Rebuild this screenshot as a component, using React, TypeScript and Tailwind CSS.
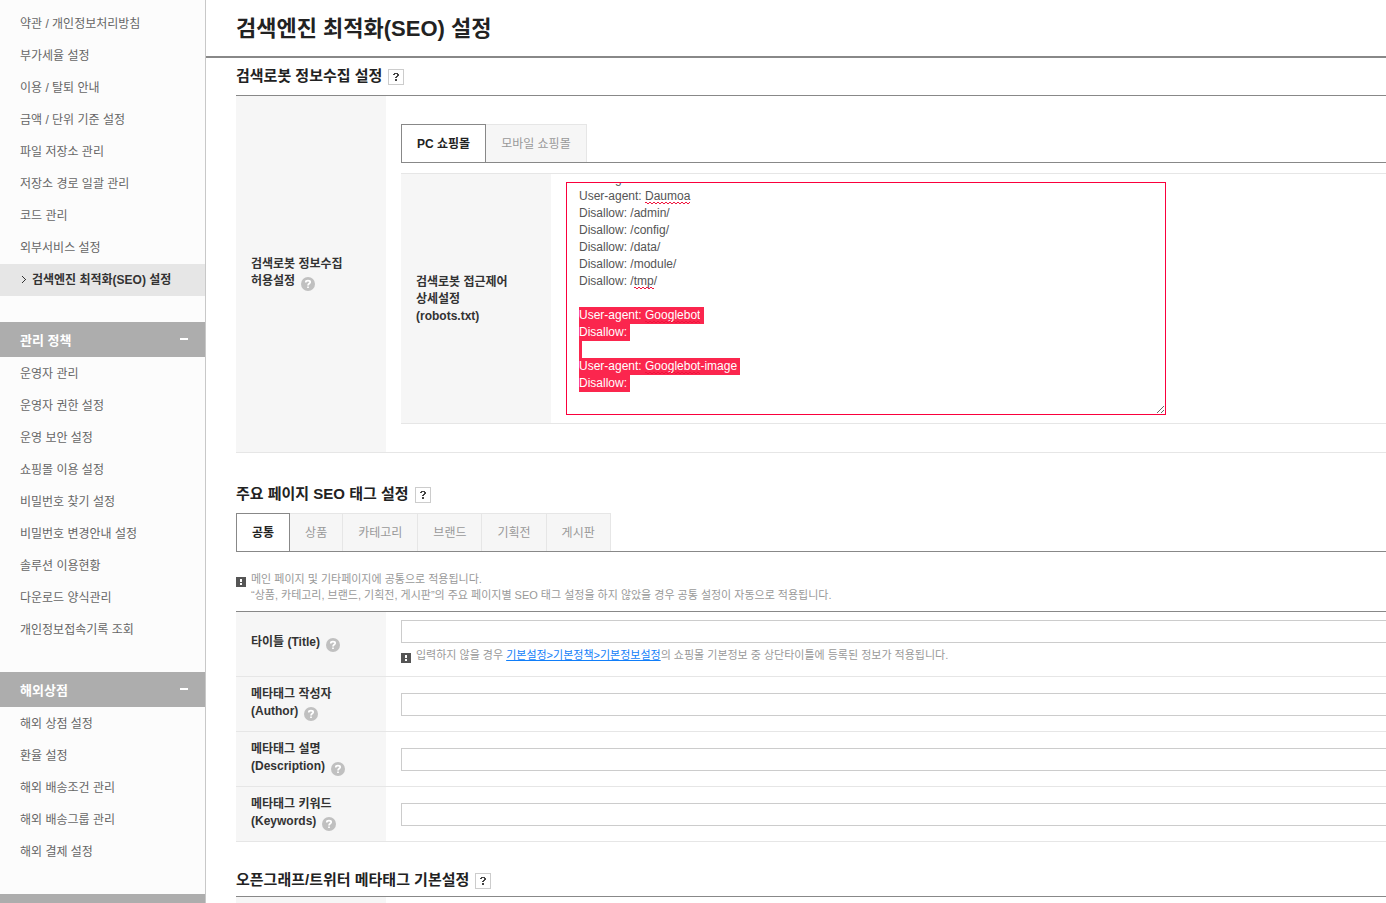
import React, { useEffect, useRef, useState } from 'react';
import clsx from 'clsx';

interface MenuGroup {
  title?: string;
  items: string[];
}

const ACTIVE_MENU = '검색엔진 최적화(SEO) 설정';

const menuGroups: MenuGroup[] = [
  {
    items: [
      '약관 / 개인정보처리방침',
      '부가세율 설정',
      '이용 / 탈퇴 안내',
      '금액 / 단위 기준 설정',
      '파일 저장소 관리',
      '저장소 경로 일괄 관리',
      '코드 관리',
      '외부서비스 설정',
      ACTIVE_MENU,
    ],
  },
  {
    title: '관리 정책',
    items: [
      '운영자 관리',
      '운영자 권한 설정',
      '운영 보안 설정',
      '쇼핑몰 이용 설정',
      '비밀번호 찾기 설정',
      '비밀번호 변경안내 설정',
      '솔루션 이용현황',
      '다운로드 양식관리',
      '개인정보접속기록 조회',
    ],
  },
  {
    title: '해외상점',
    items: ['해외 상점 설정', '환율 설정', '해외 배송조건 관리', '해외 배송그룹 관리', '해외 결제 설정'],
  },
];

const seoTabs = ['공통', '상품', '카테고리', '브랜드', '기획전', '게시판'];

const metaFields = [
  { id: 'meta-author', lines: ['메타태그 작성자', '(Author)'] },
  { id: 'meta-description', lines: ['메타태그 설명', '(Description)'] },
  { id: 'meta-keywords', lines: ['메타태그 키워드', '(Keywords)'] },
];

const blockedBot = (name: string) =>
  `User-agent: ${name}
Disallow: /admin/
Disallow: /config/
Disallow: /data/
Disallow: /module/
Disallow: /tmp/
`;

const googleRules = `User-agent: Googlebot
Disallow:

User-agent: Googlebot-image
Disallow:
`;

const robotsText = `User-agent: Daum\n${blockedBot('Daumoa')}\n${googleRules}`;

const HelpIcon: React.FC = () => (
  <button type="button" aria-label="도움말" className="ml-1.5 inline-block size-3.5 align-[-6px]">
    <svg viewBox="0 0 14 14" className="block size-3.5">
      <circle cx="7" cy="7" r="7" fill="#c0c0c0" />
      <path d="M4.8 5.6V5.2C4.8 4.2 5.6 3.7 7 3.7S9.2 4.3 9.2 5.2C9.2 6.5 7 6.6 7 8.4M7 9.6V11" fill="none" stroke="#fff" strokeWidth="1.7" />
    </svg>
  </button>
);

const ManualButton: React.FC = () => (
  <button type="button" aria-label="매뉴얼" className="mb-0.5 size-4 self-end border border-[#ccc] bg-white">
    <svg viewBox="0 0 14 14" className="block size-3.5" shapeRendering="crispEdges">
      <path d="M5 3h4v1H5zM4 4h2v1H4zM8 4h2v2H8zM7 6h2v1H7zM6 7h2v1H6zM6 9h2v2H6z" fill="#444" />
    </svg>
  </button>
);

const NoticeIcon: React.FC = () => (
  <svg viewBox="0 0 10 10" className="mt-1.5 size-2.5 shrink-0" shapeRendering="crispEdges">
    <path d="M0 0h10v10H0z" fill="#555" />
    <path d="M4 2h2v3H4zM4 6h2v2H4z" fill="#fff" />
  </svg>
);

const Notice: React.FC<{ children: React.ReactNode }> = ({ children }) => (
  <div className="flex items-start gap-[5px] text-[11px] leading-4 text-[#999]">
    <NoticeIcon />
    <p>{children}</p>
  </div>
);

const SectionTitle: React.FC<{ className?: string; children: React.ReactNode }> = ({ className, children }) => (
  <div className={clsx('flex h-6 items-center gap-1.5', className)}>
    <h2 className="pt-0.5 text-[15px] leading-6 font-bold whitespace-nowrap text-[#222]">{children}</h2>
    <ManualButton />
  </div>
);

const Tabs: React.FC<{ items: string[] }> = ({ items }) => (
  <div role="tablist" className="flex border-b border-[#888]">
    {items.map((item, index) => (
      <button
        key={item}
        type="button"
        role="tab"
        aria-selected={index === 0}
        className={clsx(
          'h-[38px] border-t border-r px-[15px] pt-0.5 whitespace-nowrap',
          index === 0
            ? 'border-l border-[#888] bg-white font-bold text-[#222]'
            : 'border-[#e6e6e6] bg-[#f6f6f6] text-[#999]'
        )}
      >
        {item}
      </button>
    ))}
  </div>
);

const Row: React.FC<{ label: React.ReactNode; className?: string; children?: React.ReactNode }> = ({
  label,
  className,
  children,
}) => (
  <div className="flex border-b border-[#e6e6e6]">
    <div className="flex w-[150px] shrink-0 items-center bg-[#f6f6f6] px-[15px] font-bold text-[#333]">{label}</div>
    <div className={clsx('min-w-0 flex-1 pl-[15px]', className)}>{children}</div>
  </div>
);

const textInput = 'block h-[23px] w-full border border-r-0 border-[#ccc] bg-white px-2 outline-none';

interface Mark {
  left: number;
  top: number;
  width: number;
}

const LINE_HEIGHT = 17;

// Where each misspelled word sits inside the editor's text
const findMarks = (input: HTMLTextAreaElement): Mark[] => {
  const ctx = document.createElement('canvas').getContext('2d');
  if (!ctx) return [];
  const { fontSize, fontFamily } = getComputedStyle(input);
  ctx.font = `${fontSize} ${fontFamily}`;

  return input.value.split('\n').flatMap((line, row) =>
    Array.from(line.matchAll(/Daumoa|tmp|Googlebot/g)).map((match) => ({
      left: ctx.measureText(line.slice(0, match.index)).width,
      top: (row + 1) * LINE_HEIGHT,
      width: ctx.measureText(match[0]).width,
    }))
  );
};

const RobotsEditor: React.FC = () => {
  const inputRef = useRef<HTMLTextAreaElement>(null);
  const [marks, setMarks] = useState<Mark[]>([]);
  const [scrollTop, setScrollTop] = useState(0);

  const refresh = () => {
    const input = inputRef.current;
    if (!input) return;
    setMarks(findMarks(input));
    setScrollTop(input.scrollTop);
  };

  // Open with the Google rules selected
  useEffect(() => {
    const input = inputRef.current;
    if (!input) return;
    input.focus();
    input.setSelectionRange(robotsText.indexOf(googleRules), robotsText.length);
    input.scrollTop = input.scrollHeight;
    refresh();
  }, []);

  return (
    <div className="relative w-[600px] max-w-full">
      <textarea
        id="robots"
        ref={inputRef}
        defaultValue={robotsText}
        spellCheck={false}
        onScroll={refresh}
        onChange={refresh}
        className="block h-[233px] w-full resize border border-[#fa003c] bg-white px-3 py-[5px] leading-[17px] text-[#555] outline-none [scrollbar-width:none] selection:bg-[#fb264e] selection:text-white"
      />
      <svg aria-hidden="true" className="pointer-events-none absolute inset-0 size-full overflow-hidden" shapeRendering="crispEdges">
        <defs>
          <pattern id="squiggle" width="4" height="2" patternUnits="userSpaceOnUse">
            <path d="M0 0h2v1H0zM2 1h2v1H2z" fill="#f0143c" />
          </pattern>
        </defs>
        {marks
          .filter((mark) => mark.top > scrollTop)
          .map((mark, index) => (
            <g key={index} transform={`translate(${Math.round(mark.left) + 13} ${mark.top - scrollTop + 3})`}>
              <rect width={Math.round(mark.width)} height="2" fill="url(#squiggle)" />
            </g>
          ))}
      </svg>
    </div>
  );
};

const Sidebar: React.FC = () => (
  <nav className="w-[206px] shrink-0 border-r border-[#c8c8c8] bg-[#fcfcfc] text-[#666]">
    {menuGroups.map((group, index) => (
      <div key={index} className="pb-[26px]">
        {group.title && (
          <button
            type="button"
            className="flex h-[35px] w-full items-center justify-between bg-[#adadad] pt-0.5 pr-[17px] pl-5 text-[13px] font-bold text-white"
          >
            {group.title}
            <span className="mb-1 h-0.5 w-2 bg-white" />
          </button>
        )}
        <ul className={group.title ? 'pt-px' : 'pt-2'}>
          {group.items.map((item) => (
            <li key={item}>
              <a
                href="#"
                className={clsx(
                  'flex h-8 items-center pl-5 whitespace-nowrap',
                  item === ACTIVE_MENU && 'bg-[#e6e6e6] font-bold text-[#333]'
                )}
              >
                {item === ACTIVE_MENU && (
                  <svg viewBox="0 0 12 8" className="h-2 w-3" shapeRendering="crispEdges">
                    <path d="M2 0h1v1H2zM3 1h1v1H3zM4 2h1v1H4zM5 3h1v1H5zM4 4h1v1H4zM3 5h1v1H3zM2 6h1v1H2z" fill="#333" />
                  </svg>
                )}
                {item}
              </a>
            </li>
          ))}
        </ul>
      </div>
    ))}
    <div className="h-[35px] bg-[#adadad]" />
  </nav>
);

export default function App() {
  return (
    <div className="flex h-screen overflow-hidden bg-white font-['Liberation_Sans','Noto_Sans_CJK_KR',sans-serif] text-xs leading-[17px]">
      <Sidebar />

      <main className="min-w-0 flex-1">
        <header className="flex h-[58px] items-center border-b-2 border-[#888] pt-0.5 pl-[30px]">
          <h1 className="text-[22px] leading-8 font-bold whitespace-nowrap text-[#222]">검색엔진 최적화(SEO) 설정</h1>
        </header>

        <div className="pl-[30px]">
          {/* Robots */}
          <SectionTitle className="mt-[5px] mb-2">검색로봇 정보수집 설정</SectionTitle>
          <section className="border-t border-[#888]">
            <Row
              className="py-7"
              label={
                <span className="pb-0.5">
                  검색로봇 정보수집
                  <br />
                  허용설정
                  <HelpIcon />
                </span>
              }
            >
              <Tabs items={['PC 쇼핑몰', '모바일 쇼핑몰']} />
              <div className="mt-2.5 border-t border-[#e6e6e6]">
                <Row
                  className="py-2"
                  label={
                    <label htmlFor="robots" className="pt-0.5">
                      검색로봇 접근제어
                      <br />
                      상세설정
                      <br />
                      (robots.txt)
                    </label>
                  }
                >
                  <RobotsEditor />
                </Row>
              </div>
            </Row>
          </section>

          {/* SEO tags */}
          <SectionTitle className="mt-7 mb-2">주요 페이지 SEO 태그 설정</SectionTitle>
          <Tabs items={seoTabs} />
          <div className="pt-[19px] pb-2">
            <Notice>
              메인 페이지 및 기타페이지에 공통으로 적용됩니다.
              <br />
              “상품, 카테고리, 브랜드, 기획전, 게시판”의 주요 페이지별 SEO 태그 설정을 하지 않았을 경우 공통 설정이 자동으로
              적용됩니다.
            </Notice>
          </div>
          <section className="border-t border-[#888]">
            <Row
              className="pt-2 pb-[13px]"
              label={
                <span className="pb-0.5">
                  <label htmlFor="meta-title">타이틀 (Title)</label>
                  <HelpIcon />
                </span>
              }
            >
              <input id="meta-title" type="text" className={textInput} />
              <div className="mt-1">
                <Notice>
                  입력하지 않을 경우{' '}
                  <a href="#" className="text-[#117ef9] underline">
                    기본설정&gt;기본정책&gt;기본정보설정
                  </a>
                  의 쇼핑몰 기본정보 중 상단타이틀에 등록된 정보가 적용됩니다.
                </Notice>
              </div>
            </Row>
            {metaFields.map((field) => (
              <Row
                key={field.id}
                className="flex h-[54px] items-center"
                label={
                  <span className="pb-0.5">
                    <label htmlFor={field.id}>
                      {field.lines[0]}
                      <br />
                      {field.lines[1]}
                    </label>
                    <HelpIcon />
                  </span>
                }
              >
                <input id={field.id} type="text" className={textInput} />
              </Row>
            ))}
          </section>

          {/* Open Graph */}
          <SectionTitle className="mt-[25px] mb-[5px]">오픈그래프/트위터 메타태그 기본설정</SectionTitle>
          <section className="border-t border-[#888]">
            <Row label="" className="h-[54px]" />
          </section>
        </div>
      </main>
    </div>
  );
}
